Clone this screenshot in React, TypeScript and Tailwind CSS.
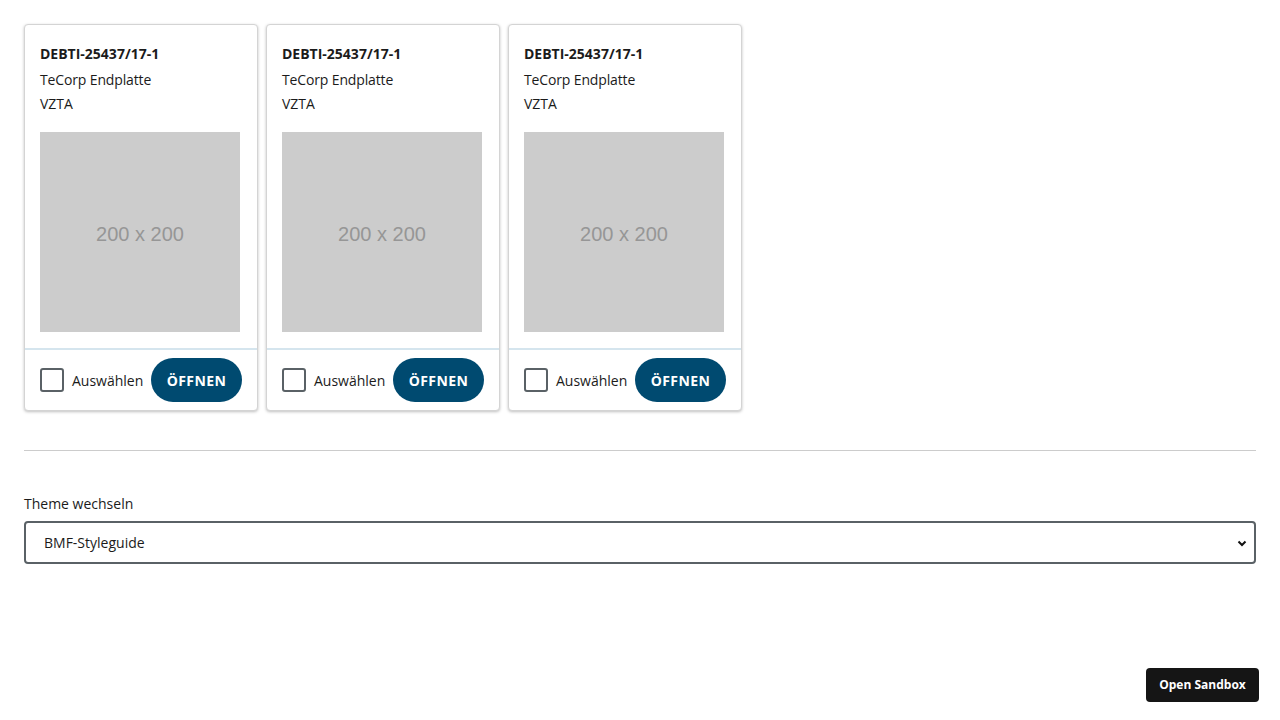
import React from "react";

function Card() {
  return (
    <div className="w-[234px] bg-white rounded-[4px] border border-[#d4d4d4] shadow-[0_1px_3px_rgba(0,0,0,0.25)] flex flex-col">
      <div className="px-[15px] pt-[19px] pb-4 flex flex-col">
        <div className="text-[14px] font-bold text-[#1b1b1b] leading-[20px]">DEBTI-25437/17-1</div>
        <div className="text-[14px] text-[#1b1b1b] leading-[20px] mt-[6px] tracking-[-0.01em]">TeCorp Endplatte</div>
        <div className="text-[14px] text-[#1b1b1b] leading-[20px] mt-[4px]">VZTA</div>
        <div className="mt-[18px] w-[200px] h-[200px] bg-[#cccccc] flex items-center justify-center pt-[4px] text-[20px] text-[#969696] font-['Liberation_Sans',Arial,sans-serif]">
          200 x 200
        </div>
      </div>
      <div className="border-t-2 border-[#d5e5ee] pl-[15px] pr-[15px] pt-2 pb-2 flex items-center justify-between">
        <label className="flex items-center gap-2 text-[14px] text-[#1b1b1b]">
          <span className="w-6 h-6 border-2 border-[#5a6166] rounded-[3px] bg-white"></span>
          Auswählen
        </label>
        <button className="h-[44px] w-[91px] rounded-full bg-[#004a70] text-white text-[14px] font-bold tracking-[0.03em]">
          ÖFFNEN
        </button>
      </div>
    </div>
  );
}

export default function App() {
  return (
    <div className="w-[1280px] h-[720px] bg-white font-['Open_Sans','Noto_Sans',sans-serif] relative">
      <div className="p-6">
        <div className="flex gap-2">
          <Card />
          <Card />
          <Card />
        </div>
        <div className="mt-[39px] h-px bg-[#cccccc]"></div>
        <div className="mt-[43px] text-[14px] text-[#1b1b1b] leading-[20px]">Theme wechseln</div>
        <div className="mt-[7px] h-[43px] border-2 border-[#5a6166] rounded-[4px] flex items-center justify-between pl-[18px] pr-[6px]">
          <span className="text-[14px] text-[#1b1b1b]">BMF-Styleguide</span>
          <svg width="12" height="12" viewBox="0 0 12 12">
            <path d="M2.5 4.5 L6 8 L9.5 4.5" stroke="#111" strokeWidth="2" fill="none" />
          </svg>
        </div>
      </div>
      <button className="absolute left-[1146px] top-[668px] w-[113px] h-[34px] bg-[#151515] rounded-[4px] text-white text-[12px] font-bold">
        Open Sandbox
      </button>
    </div>
  );
}
